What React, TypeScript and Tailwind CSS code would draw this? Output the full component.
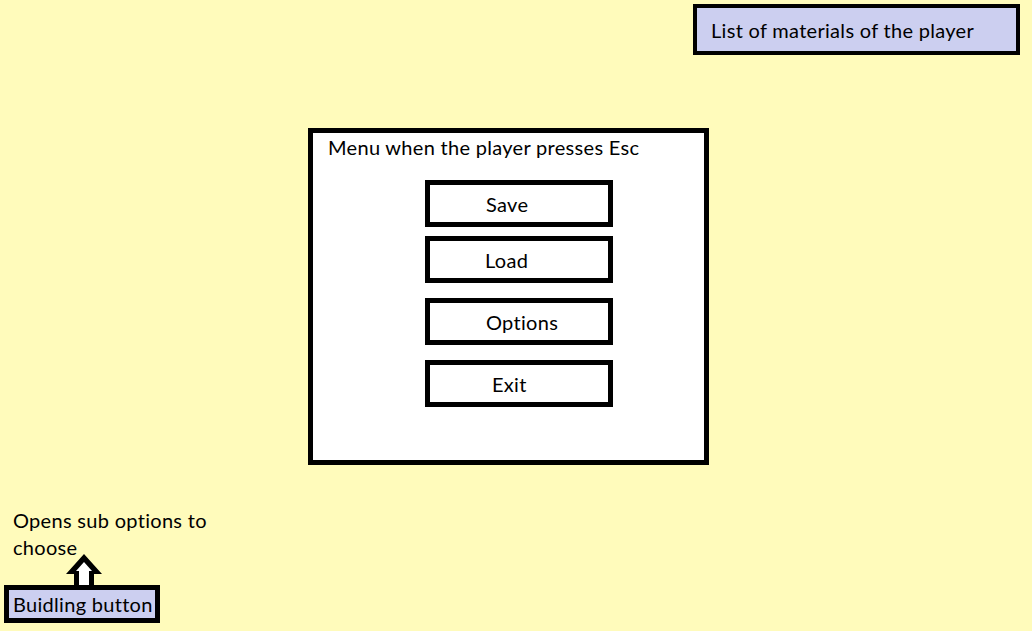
import React from "react";

const font = { fontFamily: "Lato, 'Open Sans', sans-serif" };

function MenuButton({ label, pl, mt }: { label: string; pl: string; mt: string }) {
  return (
    <div
      className={`w-[188px] h-[47px] border-[5px] border-black bg-white flex items-center ${mt}`}
    >
      <span className={`text-[20px] tracking-[0.3px] text-black leading-none ${pl}`}>{label}</span>
    </div>
  );
}

export default function App() {
  return (
    <div
      className="w-[1032px] h-[631px] bg-[#FFFBBB] flex flex-col overflow-hidden text-black"
      style={font}
    >
      <div className="flex justify-end pt-[4px] pr-[12px]">
        <div className="w-[327px] h-[51px] border-[4px] border-black bg-[#CCCFF0] flex items-center pl-[14px]">
          <span className="text-[20px] tracking-[0.3px] leading-none">List of materials of the player</span>
        </div>
      </div>

      <div className="ml-[308px] mt-[73px] w-[401px] h-[337px] border-[5px] border-black bg-white flex flex-col">
        <div className="pl-[15px] pt-[1px] text-[20px] tracking-[0.3px] leading-[26px]">
          Menu when the player presses Esc
        </div>
        <div className="flex flex-col pl-[112px]">
          <MenuButton label="Save" pl="pl-[56px]" mt="mt-[20px]" />
          <MenuButton label="Load" pl="pl-[55px]" mt="mt-[9px]" />
          <MenuButton label="Options" pl="pl-[56px]" mt="mt-[15px]" />
          <MenuButton label="Exit" pl="pl-[62px]" mt="mt-[15px]" />
        </div>
      </div>

      <div className="flex flex-col mt-auto pb-[8px]">
        <div className="pl-[13px] text-[20px] tracking-[0.3px] leading-[27px] w-[230px]">
          Opens sub options to
          <br />
          choose
        </div>
        <div className="pl-[64px] h-[32px] -mt-[8px]">
          <svg width="40" height="32" viewBox="0 0 40 32" className="block">
            <path d="M20 1 L38 21 L30 21 L30 32 L10 32 L10 21 L2 21 Z" fill="black" />
            <path d="M20 9 L28 18 L25 18 L25 32 L15 32 L15 18 L12 18 Z" fill="white" />
          </svg>
        </div>
        <div className="ml-[4px] w-[156px] h-[38px] border-[5px] border-black bg-[#CCCFF0] flex items-center pl-[4px]">
          <span className="text-[20px] tracking-[0.3px] leading-none whitespace-nowrap">Buidling button</span>
        </div>
      </div>
    </div>
  );
}
